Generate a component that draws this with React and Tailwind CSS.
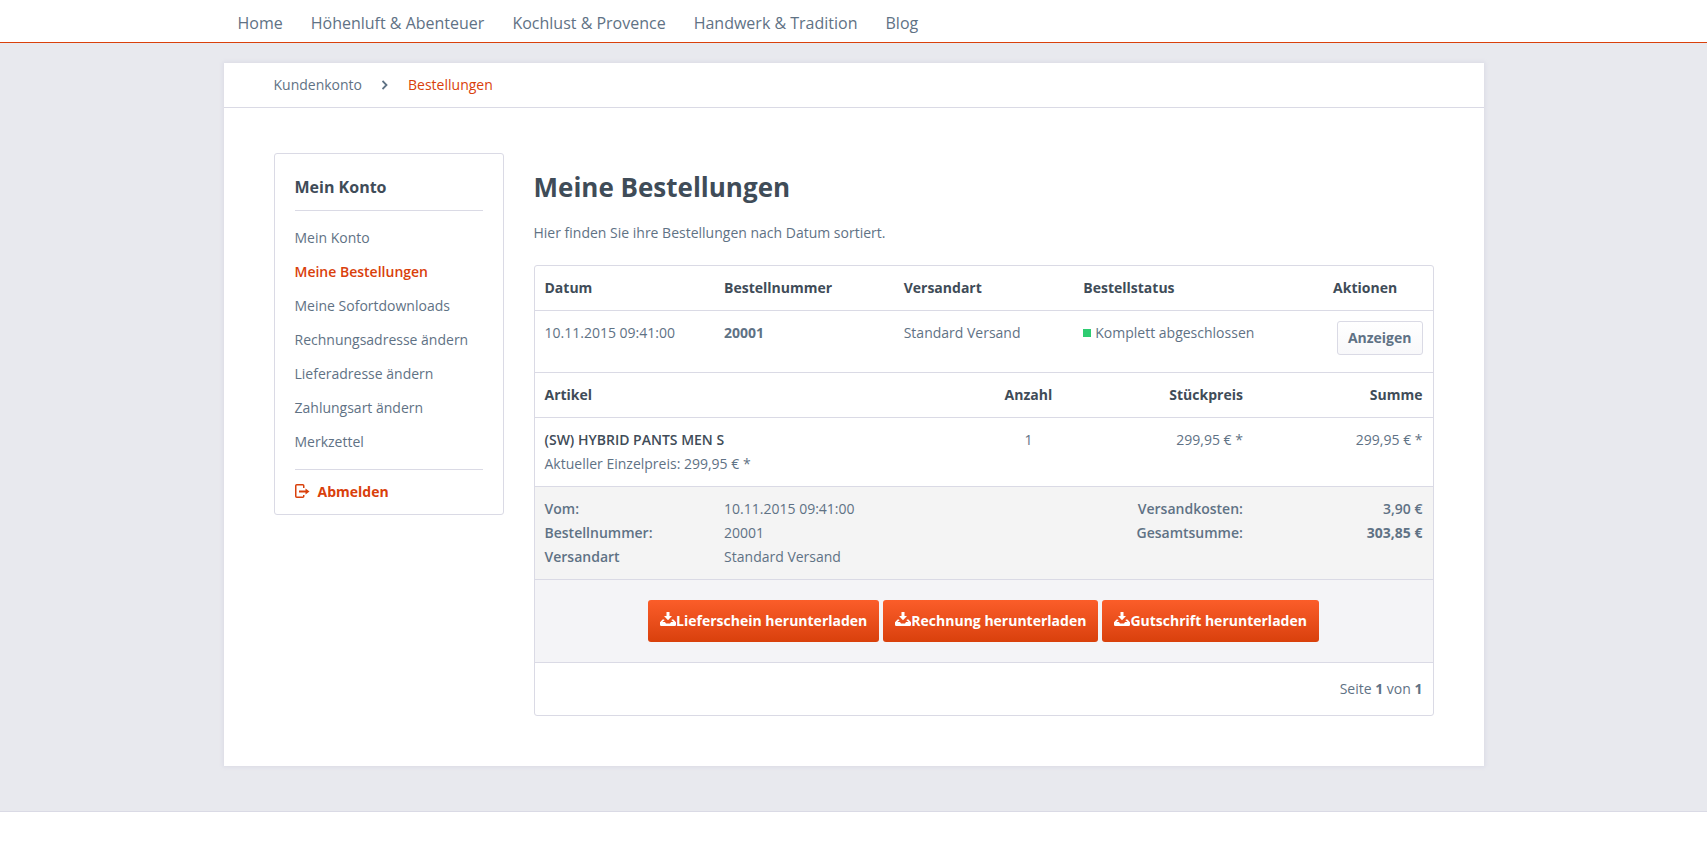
import React from 'react';

const NAV_ITEMS = ['Home', 'Höhenluft & Abenteuer', 'Kochlust & Provence', 'Handwerk & Tradition', 'Blog'];

const ACCOUNT_LINKS = [
  'Mein Konto',
  'Meine Bestellungen',
  'Meine Sofortdownloads',
  'Rechnungsadresse ändern',
  'Lieferadresse ändern',
  'Zahlungsart ändern',
  'Merkzettel',
];

const DOWNLOADS = ['Lieferschein herunterladen', 'Rechnung herunterladen', 'Gutschrift herunterladen'];

function ChevronIcon() {
  return (
    <svg viewBox="0 0 6 10" className="h-2.5 w-1.5" fill="none" stroke="currentColor" strokeWidth="1.8" aria-hidden="true">
      <path d="M0.5 1 L4.5 5 L0.5 9" />
    </svg>
  );
}

function LogoutIcon() {
  return (
    <svg viewBox="0 0 15 16" className="h-4 w-[15px]" fill="none" stroke="currentColor" aria-hidden="true">
      <path d="M8.75 4 V1.75 Q8.75 0.75 7.75 0.75 H1.75 Q0.75 0.75 0.75 1.75 V12.25 Q0.75 13.25 1.75 13.25 H7.75 Q8.75 13.25 8.75 12.25 V11" strokeWidth="1.5" />
      <path d="M4 7.5 H12" strokeWidth="2" />
      <path d="M10.5 4.5 L14.5 7.5 L10.5 10.5 Z" fill="currentColor" stroke="none" />
    </svg>
  );
}

function DownloadIcon() {
  return (
    <svg viewBox="0 0 16 18" className="h-[18px] w-4" fill="currentColor" aria-hidden="true">
      <path d="M6.5 0 H9.5 V4 H12 L8 8.2 L4 4 H6.5 Z" />
      <path d="M2.6 7.4 H4 L4.6 8.2 L2.4 10 H5 L6 11.4 H10 L11 10 H13.6 L11.4 8.2 L12 7.4 H13.4 L16 10.2 V12.8 Q16 14 14.8 14 H1.2 Q0 14 0 12.8 V10.2 Z" />
    </svg>
  );
}

function Sidebar() {
  return (
    <aside className="w-[230px] shrink-0 rounded-[3px] border border-[#dadae5] px-5">
      <h2 className="border-b border-[#dadae5] pt-5 pb-2.5 text-base leading-[26px] font-bold text-[#3f4c58]">Mein Konto</h2>
      <ul className="border-b border-[#dadae5] py-2.5">
        {ACCOUNT_LINKS.map((label) => (
          <li key={label}>
            <a
              href="#"
              className={label === 'Meine Bestellungen' ? 'block leading-[34px] font-semibold text-[#d9400b]' : 'block leading-[34px]'}
            >
              {label}
            </a>
          </li>
        ))}
      </ul>
      <a href="#" className="flex items-center gap-2 leading-[44px] font-bold text-[#d9400b]">
        <LogoutIcon />
        Abmelden
      </a>
    </aside>
  );
}

function Orders() {
  return (
    <div className="overflow-hidden rounded-[3px] border border-[#dadae5]">
      <table className="w-full table-fixed text-left">
        <thead>
          <tr className="border-b border-[#dadae5] text-[#3f4c58]">
            <th className="w-1/5 p-2.5 font-bold">Datum</th>
            <th className="w-1/5 p-2.5 font-bold">Bestellnummer</th>
            <th className="w-1/5 p-2.5 font-bold">Versandart</th>
            <th className="w-1/4 p-2.5 font-bold">Bestellstatus</th>
            <th className="w-[15%] p-2.5 text-center font-bold">Aktionen</th>
          </tr>
        </thead>
        <tbody>
          <tr className="border-b border-[#dadae5] align-top">
            <td className="p-2.5">10.11.2015 09:41:00</td>
            <td className="p-2.5 font-bold">20001</td>
            <td className="p-2.5">Standard Versand</td>
            <td className="p-2.5">
              <span className="flex items-center gap-1">
                <span className="size-2 bg-[#2ecc71]" />
                Komplett abgeschlossen
              </span>
            </td>
            <td className="px-2.5 pt-2.5 pb-[17px] text-right">
              <button
                type="button"
                className="h-[34px] rounded-[3px] border border-[#dadae5] bg-linear-to-b from-white to-[#f8f8fa] px-2.5 font-bold"
              >
                Anzeigen
              </button>
            </td>
          </tr>
        </tbody>
      </table>

      {/* Order positions */}
      <table className="w-full table-fixed text-right">
        <thead>
          <tr className="border-b border-[#dadae5] text-[#3f4c58]">
            <th className="w-1/2 p-2.5 text-left font-bold">Artikel</th>
            <th className="w-[10%] p-2.5 text-center font-bold">Anzahl</th>
            <th className="w-1/5 p-2.5 font-bold">Stückpreis</th>
            <th className="w-1/5 p-2.5 font-bold">Summe</th>
          </tr>
        </thead>
        <tbody>
          <tr className="border-b border-[#dadae5] align-top">
            <td className="p-2.5 text-left">
              <p className="font-semibold text-[#3f4c58]">(SW) HYBRID PANTS MEN S</p>
              <p>Aktueller Einzelpreis: 299,95 € *</p>
            </td>
            <td className="p-2.5 text-center">1</td>
            <td className="p-2.5">299,95 € *</td>
            <td className="p-2.5">299,95 € *</td>
          </tr>
        </tbody>
      </table>

      {/* Order summary */}
      <div className="flex border-b border-[#dadae5] bg-[#f4f4f4]">
        <div className="w-1/5 p-2.5 font-semibold">
          <p>Vom:</p>
          <p>Bestellnummer:</p>
          <p>Versandart</p>
        </div>
        <div className="w-1/5 p-2.5">
          <p>10.11.2015 09:41:00</p>
          <p>20001</p>
          <p>Standard Versand</p>
        </div>
        <div className="w-2/5 p-2.5 text-right font-semibold">
          <p>Versandkosten:</p>
          <p>Gesamtsumme:</p>
        </div>
        <div className="w-1/5 p-2.5 text-right">
          <p className="font-semibold">3,90 €</p>
          <p className="font-bold">303,85 €</p>
        </div>
      </div>

      {/* Document downloads */}
      <div className="flex justify-center gap-1 border-b border-[#dadae5] bg-[#f4f4f7] py-5">
        {DOWNLOADS.map((label) => (
          <button
            key={label}
            type="button"
            className="flex h-[42px] items-center rounded-[3px] bg-linear-to-b from-[#fb5d29] to-[#d9400b] px-3 font-bold text-white"
          >
            <DownloadIcon />
            {label}
          </button>
        ))}
      </div>

      <p className="px-2.5 py-3.5 text-right">
        Seite <b>1</b> von <b>1</b>
      </p>
    </div>
  );
}

export default function App() {
  return (
    <div className="bg-white font-['Open_Sans',sans-serif] text-sm leading-6 text-[#5f7285]">
      <nav className="border-b border-[#d9400b]">
        <ul className="mx-auto flex max-w-[1260px] text-base">
          {NAV_ITEMS.map((item) => (
            <li key={item}>
              <a href="#" className="block px-3.5 pt-1 leading-[38px]">{item}</a>
            </li>
          ))}
        </ul>
      </nav>

      <div className="border-b border-[#dadae5] bg-[#e8e9ee] pt-5 pb-[45px]">
        <div className="mx-auto max-w-[1260px] bg-white shadow-[0_0_4px_1px_#dadae5]">
          <div className="flex h-[45px] items-center gap-5 border-b border-[#dadae5] px-[50px]">
            <a href="#">Kundenkonto</a>
            <ChevronIcon />
            <a href="#" className="text-[#d9400b]">Bestellungen</a>
          </div>

          <div className="flex items-start gap-[30px] px-[50px] pt-[45px] pb-[50px]">
            <Sidebar />
            <main className="min-w-0 flex-1 pt-4">
              <h1 className="text-[26px] leading-9 font-bold text-[#3f4c58]">Meine Bestellungen</h1>
              <p className="pt-4 pb-5">Hier finden Sie ihre Bestellungen nach Datum sortiert.</p>
              <Orders />
            </main>
          </div>
        </div>
      </div>
    </div>
  );
}
